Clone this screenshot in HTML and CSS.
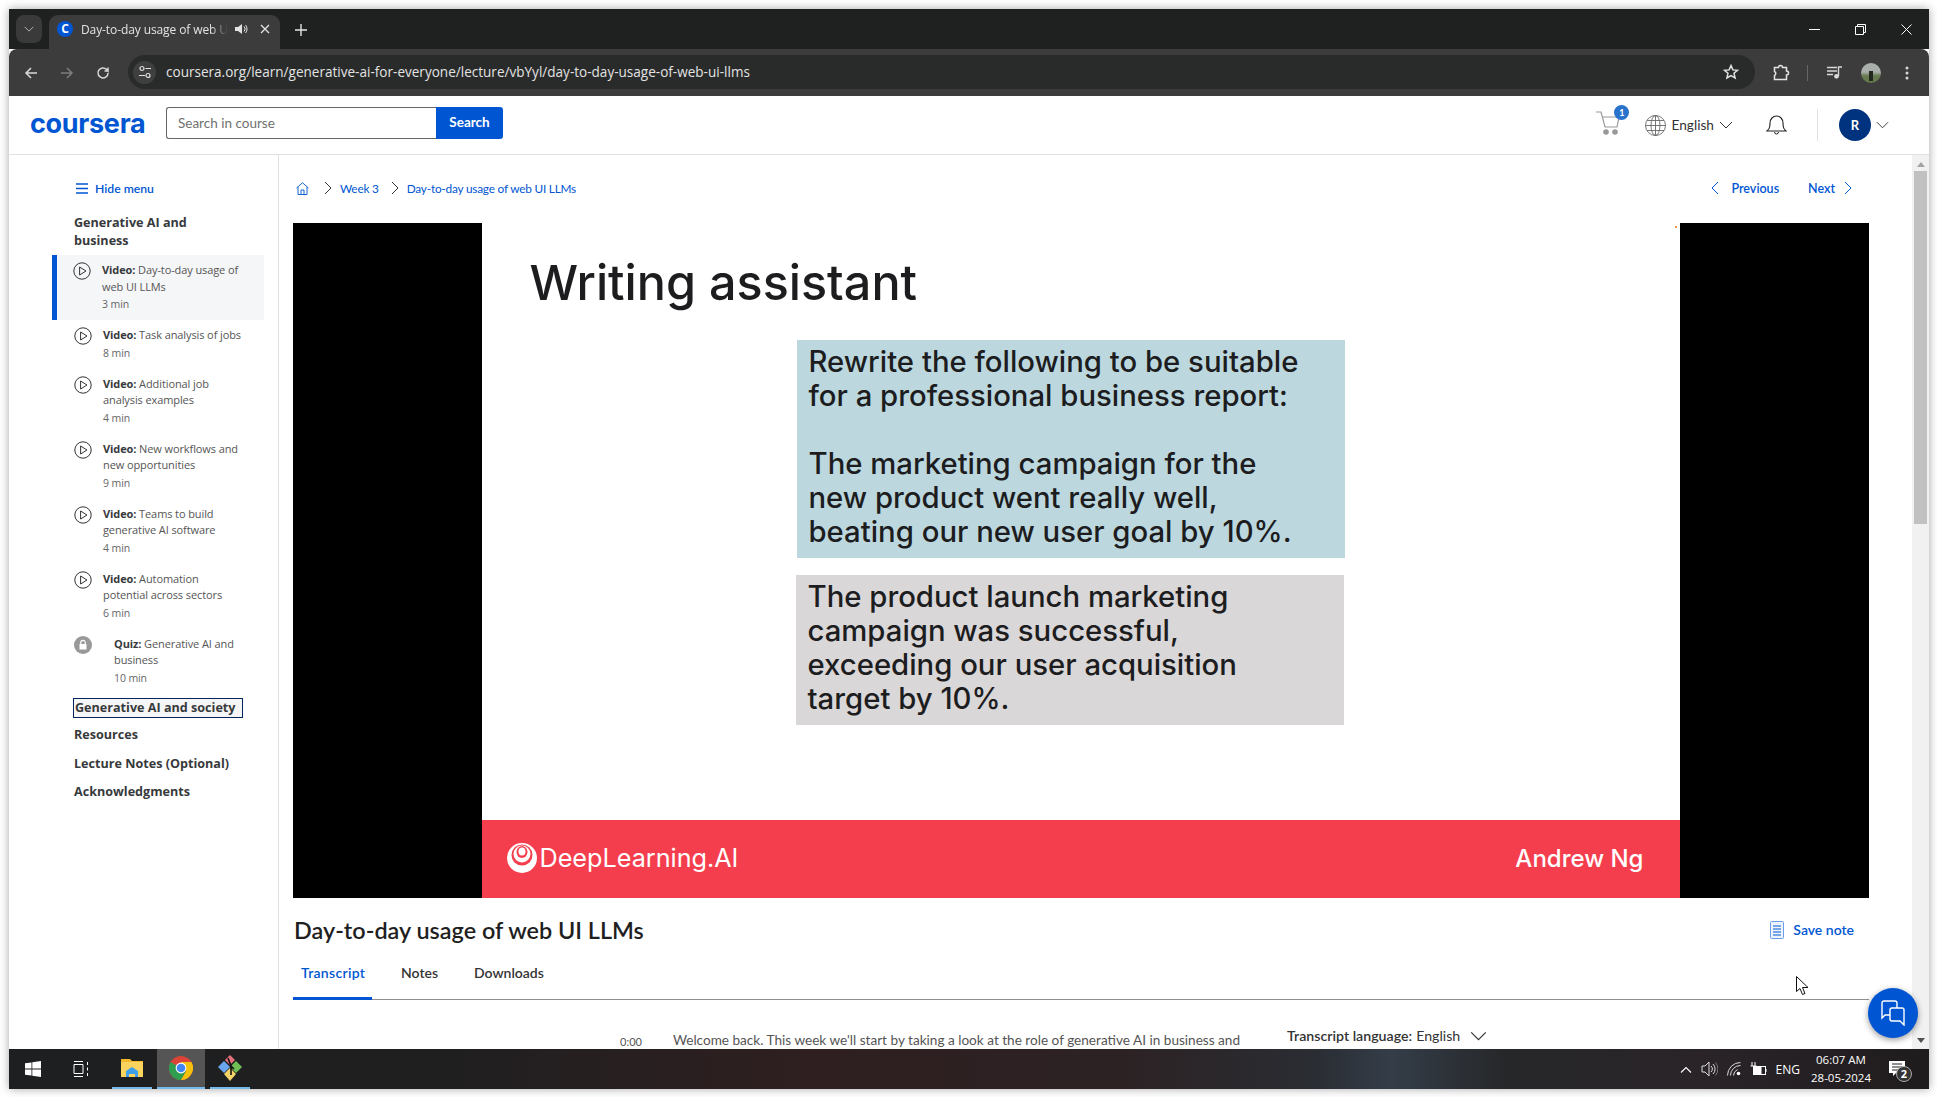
FILE: index.html
```html
<!DOCTYPE html>
<html lang="en">
<head>
  <meta charset="UTF-8" />
  <title>Day-to-day usage of web UI LLMs</title>
  <link rel="stylesheet" href="styles.css">
</head>
<body>
  <svg class="sprite" width="0" height="0">
    <symbol id="play" viewBox="0 0 18 18">
      <circle cx="9" cy="9" r="8.2" fill="none" stroke="#333" stroke-width="1"/>
      <path d="M6.6 5v8l6.4-4z" fill="none" stroke="#333" stroke-width="1"/>
    </symbol>
    <symbol id="chev-down" viewBox="0 0 14 8">
      <path d="M1 1l6 6 6-6" fill="none" stroke="currentColor" stroke-width="1"/>
    </symbol>
    <symbol id="chev-right" viewBox="0 0 8 14">
      <path d="M1 1l6 6-6 6" fill="none" stroke="currentColor" stroke-width="1"/>
    </symbol>
  </svg>

  <div class="window">
    <div class="tabstrip">
      <div class="tab-search"><svg width="10" height="6"><use href="#chev-down"/></svg></div>
      <div class="tab">
        <span class="favicon">C</span>
        <span class="tab-title">Day-to-day usage of web UI LLMs</span>
        <svg class="tab-audio" width="14" height="14" viewBox="0 0 14 14"><path d="M1 5h3l4-3v10l-4-3H1z" fill="#e3e3e3"/><path d="M10 4.5a3.5 3.5 0 0 1 0 5M11.5 3a6 6 0 0 1 0 8" fill="none" stroke="#e3e3e3"/></svg>
        <svg class="tab-close" width="10" height="10" viewBox="0 0 10 10"><path d="M1 1l8 8M9 1l-8 8" stroke="#e3e3e3" stroke-width="1.3"/></svg>
      </div>
      <svg class="new-tab" width="12" height="12" viewBox="0 0 12 12"><path d="M6 0v12M0 6h12" stroke="#e3e3e3" stroke-width="1.4"/></svg>
      <div class="win-controls">
        <svg width="11" height="11" viewBox="0 0 11 11"><path d="M0 5.5h11" stroke="#fff"/></svg>
        <svg width="11" height="11" viewBox="0 0 11 11"><path d="M.5 2.5h8v8h-8zM2.5 2.5v-2h8v8h-2" fill="none" stroke="#fff"/></svg>
        <svg width="11" height="11" viewBox="0 0 11 11"><path d="M.5.5l10 10M10.5.5l-10 10" stroke="#fff"/></svg>
      </div>
    </div>

    <div class="toolbar">
      <svg class="nav-icon" width="14" height="14" viewBox="0 0 14 14"><path d="M13 7H2M7 2L2 7l5 5" fill="none" stroke="#d8d8d8" stroke-width="1.5"/></svg>
      <svg class="nav-icon" width="14" height="14" viewBox="0 0 14 14"><path d="M1 7h11M7 2l5 5-5 5" fill="none" stroke="#7d7d7d" stroke-width="1.5"/></svg>
      <svg class="nav-icon" width="14" height="14" viewBox="0 0 14 14"><path d="M12 7a5 5 0 1 1-1.5-3.6L12 5V1.5M12 5H8.5" fill="none" stroke="#d8d8d8" stroke-width="1.5"/></svg>
      <div class="omnibox">
        <span class="site-info"><svg width="14" height="14" viewBox="0 0 14 14"><circle cx="4" cy="3.5" r="2" fill="none" stroke="#e3e3e3" stroke-width="1.2"/><path d="M7.5 3.5H13M1 10.5h6" stroke="#e3e3e3" stroke-width="1.2"/><circle cx="10" cy="10.5" r="2" fill="none" stroke="#e3e3e3" stroke-width="1.2"/></svg></span>
        <span class="url">coursera.org/learn/generative-ai-for-everyone/lecture/vbYyl/day-to-day-usage-of-web-ui-llms</span>
        <svg class="star" width="16" height="16" viewBox="0 0 16 16"><path d="M8 1.6l1.9 4.3 4.6.4-3.5 3 1.1 4.6L8 11.5l-4.1 2.4L5 9.3l-3.5-3 4.6-.4z" fill="none" stroke="#e3e3e3" stroke-width="1.5"/></svg>
      </div>
      <svg class="ext" width="17" height="17" viewBox="0 0 17 17"><path d="M1.5 3.5h4a2 2 0 0 1 4 0h4V7a2 2 0 0 1 0 4v4.500h-12v-4a2.200 2.200 0 0 0 0-4z" fill="none" stroke="#e3e3e3" stroke-width="1.5"/></svg>
      <span class="tool-sep"></span>
      <svg class="media" width="16" height="13" viewBox="0 0 16 13"><path d="M0 1.500h10M0 5h10M0 8.500h6" stroke="#d8d8d8" stroke-width="1.4"/><path d="M11.500 10V1H15" fill="none" stroke="#d8d8d8" stroke-width="1.4"/><circle cx="9.500" cy="10.300" r="2.400" fill="#d8d8d8"/></svg>
      <span class="profile-pic"><span class="profile-man"></span></span>
      <svg class="kebab" width="4" height="14" viewBox="0 0 4 14"><circle cx="2" cy="2" r="1.500" fill="#d8d8d8"/><circle cx="2" cy="7" r="1.500" fill="#d8d8d8"/><circle cx="2" cy="12" r="1.500" fill="#d8d8d8"/></svg>
    </div>

    <header class="site-header">
      <span class="logo">coursera</span>
      <div class="search-box">
        <span class="search-input">Search in course</span>
        <span class="search-btn">Search</span>
      </div>
      <div class="header-right">
        <span class="cart">
          <svg width="26" height="24" viewBox="0 0 26 24"><path d="M0 1h5l4 15h12l2-10H7" fill="none" stroke="#999" stroke-width="1.2"/><circle cx="10" cy="21" r="2.800" fill="#999"/><circle cx="19" cy="21" r="2.800" fill="#999"/></svg>
          <span class="cart-badge">1</span>
        </span>
        <span class="lang">
          <svg width="21" height="21" viewBox="0 0 21 21" fill="none" stroke="#666" stroke-width=".9"><circle cx="10.500" cy="10.500" r="10"/><ellipse cx="10.500" cy="10.500" rx="4.500" ry="10"/><path d="M10.500.5v20M.5 10.500h20M2 5.500h17M2 15.500h17"/></svg>
          <span>English</span>
          <svg class="chev" width="14" height="8"><use href="#chev-down"/></svg>
        </span>
        <svg class="bell" width="21" height="22" viewBox="0 0 21 22"><path d="M1 17c2-2 3-3 3-8 0-4 3-7 6.500-7S17 5 17 9c0 5 1 6 3 8z" fill="none" stroke="#222" stroke-width="1.1"/><path d="M8.500 18a2 2 0 0 0 4 0" fill="none" stroke="#222"/></svg>
        <span class="head-sep"></span>
        <span class="avatar">R</span>
        <svg class="chev" width="13" height="8"><use href="#chev-down"/></svg>
      </div>
    </header>

    <div class="content">
      <aside class="sidebar">
        <div class="hide-menu">
          <svg width="12" height="11" viewBox="0 0 12 11"><path d="M0 1h12M0 5.500h12M0 10h12" stroke="#0056d2" stroke-width="1.4"/></svg>
          <span>Hide menu</span>
        </div>
        <div class="module-title">Generative AI and business</div>
        <ul class="lessons">
          <li class="lesson active">
            <svg class="lesson-icon" width="18" height="18"><use href="#play"/></svg>
            <div><p><b>Video:</b> Day-to-day usage of<br>web UI LLMs</p><p class="dur">3 min</p></div>
          </li>
          <li class="lesson">
            <svg class="lesson-icon" width="18" height="18"><use href="#play"/></svg>
            <div><p><b>Video:</b> Task analysis of jobs</p><p class="dur">8 min</p></div>
          </li>
          <li class="lesson">
            <svg class="lesson-icon" width="18" height="18"><use href="#play"/></svg>
            <div><p><b>Video:</b> Additional job<br>analysis examples</p><p class="dur">4 min</p></div>
          </li>
          <li class="lesson">
            <svg class="lesson-icon" width="18" height="18"><use href="#play"/></svg>
            <div><p><b>Video:</b> New workflows and<br>new opportunities</p><p class="dur">9 min</p></div>
          </li>
          <li class="lesson">
            <svg class="lesson-icon" width="18" height="18"><use href="#play"/></svg>
            <div><p><b>Video:</b> Teams to build<br>generative AI software</p><p class="dur">4 min</p></div>
          </li>
          <li class="lesson">
            <svg class="lesson-icon" width="18" height="18"><use href="#play"/></svg>
            <div><p><b>Video:</b> Automation<br>potential across sectors</p><p class="dur">6 min</p></div>
          </li>
          <li class="lesson quiz">
            <svg class="lesson-icon" width="18" height="18" viewBox="0 0 18 18"><circle cx="9" cy="9" r="9" fill="#999"/><rect x="5.500" y="8" width="7" height="5.500" fill="#fff"/><path d="M6.800 8V6.500a2.200 2.200 0 0 1 4.400 0V8" fill="none" stroke="#fff" stroke-width="1.2"/></svg>
            <div><p><b>Quiz:</b> Generative AI and<br>business</p><p class="dur">10 min</p></div>
          </li>
        </ul>
        <div class="module focused">Generative AI and society</div>
        <div class="module">Resources</div>
        <div class="module">Lecture Notes (Optional)</div>
        <div class="module">Acknowledgments</div>
      </aside>

      <main class="main">
        <div class="crumbs">
          <svg class="home" width="13" height="13" viewBox="0 0 13 13"><path d="M.5 6L6.500.8 12.500 6M2 5v7.500h9V5M5 12.500V8h3v4.500" fill="none" stroke="#0056d2" stroke-width=".9"/></svg>
          <svg class="crumb-sep" width="8" height="14"><use href="#chev-right"/></svg>
          <span>Week 3</span>
          <svg class="crumb-sep" width="8" height="14"><use href="#chev-right"/></svg>
          <span>Day-to-day usage of web UI LLMs</span>
          <span class="pager">
            <svg class="flip" width="8" height="14"><use href="#chev-right"/></svg>
            <span class="prev">Previous</span>
            <span class="next">Next</span>
            <svg width="8" height="14"><use href="#chev-right"/></svg>
          </span>
        </div>

        <div class="video">
          <div class="slide">
            <div class="slide-body">
              <h2 class="slide-title">Writing assistant</h2>
              <div class="prompt-box">Rewrite the following to be suitable<br>for a professional business report:<br><br>The marketing campaign for the<br>new product went really well,<br>beating our new user goal by 10%.</div>
              <div class="answer-box">The product launch marketing<br>campaign was successful,<br>exceeding our user acquisition<br>target by 10%.</div>
            </div>
            <div class="slide-foot">
              <svg width="30" height="30" viewBox="0 0 30 30"><circle cx="15" cy="15" r="15" fill="#fff"/><circle cx="15" cy="12" r="10.500" fill="#f53e4d"/><circle cx="15" cy="11" r="8.500" fill="#fff"/><ellipse cx="15" cy="9" rx="5.500" ry="6" fill="#f53e4d"/><ellipse cx="15" cy="8.500" rx="3.500" ry="4" fill="#fff"/></svg>
              <span class="dl-name">DeepLearning.AI</span>
              <span class="presenter">Andrew Ng</span>
            </div>
            <span class="slide-dot"></span>
          </div>
        </div>

        <div class="title-row">
          <h1>Day-to-day usage of web UI LLMs</h1>
          <span class="save-note">
            <svg width="14" height="18" viewBox="0 0 14 18"><rect x=".5" y=".5" width="13" height="17" rx="1" fill="#eef4fd" stroke="#6a9fe8"/><path d="M3 5h8M3 8h8M3 11h8M3 14h8" stroke="#0056d2"/></svg>
            <span>Save note</span>
          </span>
        </div>

        <div class="tabs">
          <span class="tab-link current">Transcript</span>
          <span class="tab-link">Notes</span>
          <span class="tab-link">Downloads</span>
        </div>

        <div class="transcript">
          <span class="stamp">0:00</span>
          <span class="line">Welcome back. This week we'll start by taking a look at the role of generative AI in business and</span>
          <span class="tr-lang"><b>Transcript language:</b> English
            <svg width="17" height="10"><use href="#chev-down"/></svg>
          </span>
        </div>
      </main>

      <div class="scrollbar">
        <span class="arrow up"></span>
        <span class="thumb"></span>
        <span class="arrow down"></span>
      </div>
    </div>

    <footer class="taskbar">
      <svg class="win-logo" width="16" height="16" viewBox="0 0 16 16"><path d="M0 2.300l6.500-.9v6.200H0zM7.300 1.300L16 0v7.600H7.300zM0 8.400h6.500v6.200L0 13.700zM7.300 8.400H16V16l-8.700-1.300z" fill="#fff"/></svg>
      <svg class="task-view" width="16" height="16" viewBox="0 0 16 16" fill="none" stroke="#fff"><path d="M1 .5h9M1 15.500h9M1 3.500h9v9H1zM14.500 1v3M14.500 6.500v3M14.500 12v3"/></svg>
      <span class="task-item explorer">
        <svg width="22" height="22" viewBox="0 0 22 22"><path d="M0 2h9l2 2h11v16H0z" fill="#f5b92c"/><path d="M0 5h22v15H0z" fill="#fbd45f"/><path d="M5 14l6-4 6 4v6h-3v-3H8v3H5z" fill="#3f9fe8"/></svg>
      </span>
      <span class="task-item chrome">
        <svg width="24" height="24" viewBox="0 0 24 24"><circle cx="12" cy="12" r="12" fill="#db4437"/><path d="M12 12L1.600 6A12 12 0 0 0 12 24l5.200-9z" fill="#2f9e4f"/><path d="M12 6h10.400A12 12 0 0 1 12 24l5.200-9z" fill="#f4c20d"/><circle cx="12" cy="12" r="5.400" fill="#fff"/><circle cx="12" cy="12" r="4.300" fill="#4285f4"/></svg>
      </span>
      <span class="task-item gitapp">
        <svg width="24" height="26" viewBox="0 0 24 26"><path d="M0 12l6-6 6 6-6 6z" fill="#6aa5f0"/><path d="M7 5l5-5 5 5-5 5z" fill="#e5707b"/><path d="M12 12l6-6 6 6-6 6z" fill="#6fbf55"/><path d="M6 19l6-6 6 6-6 7z" fill="#f3d468"/><path d="M10 3l3 8v9M13 11l3 3" fill="none" stroke="#111" stroke-width="1.6"/></svg>
      </span>
      <div class="tray">
        <svg width="12" height="7" viewBox="0 0 12 7"><path d="M1 6.500l5-5 5 5" fill="none" stroke="#fff" stroke-width="1.1"/></svg>
        <svg width="17" height="16" viewBox="0 0 17 16" fill="none" stroke="#ddd"><path d="M1 5h3l4-4v14l-4-4H1z"/><path d="M10 5a4 4 0 0 1 0 6M12 3a7 7 0 0 1 0 10" /><path d="M14.500 1.500a10 10 0 0 1 0 13" stroke="#777"/></svg>
        <svg width="14" height="14" viewBox="0 0 14 14" fill="none" stroke="#ddd"><path d="M.5 13.500A13 13 0 0 1 13.500.5M3.500 13.500a10 10 0 0 1 10-10M6.500 13.500a7 7 0 0 1 4-6"/><circle cx="11.500" cy="11.500" r="1.800" fill="#fff" stroke="none"/></svg>
        <svg width="17" height="14" viewBox="0 0 17 14"><rect x="3.500" y="4.500" width="12" height="8" fill="none" stroke="#fff"/><rect x="3.500" y="4.500" width="8" height="8" fill="#fff"/><path d="M16 7v3" stroke="#fff"/><path d="M2 0v4M5 0v4M.5 4h6" stroke="#fff"/></svg>
        <span class="eng">ENG</span>
        <span class="clock"><span>06:07 AM</span><span>28-05-2024</span></span>
        <span class="notif">
          <svg width="16" height="16" viewBox="0 0 16 16"><path d="M0 0h16v12H7l-3 3v-3H0z" fill="#fff"/><path d="M3 3h10M3 6h10M3 9h7" stroke="#222"/></svg>
          <span class="notif-count">2</span>
        </span>
      </div>
    </footer>

    <span class="chat-btn">
      <svg width="26" height="26" viewBox="0 0 26 26" fill="none" stroke="#fff" stroke-width="1.4"><path d="M10 15H5l-3 3V3a2 2 0 0 1 2-2h11a2 2 0 0 1 2 2v5"/><path d="M10 10a2 2 0 0 1 2-2h10a2 2 0 0 1 2 2v15l-4-4h-8a2 2 0 0 1-2-2z"/></svg>
    </span>
    <svg class="mouse" width="13" height="20" viewBox="0 0 13 20"><path d="M.5.5v15l3.500-3 2.500 6 2.500-1-2.500-6H12z" fill="#fff" stroke="#111"/></svg>
  </div>
</body>
</html>
```

FILE: styles.css
```css
* { box-sizing: border-box; }

body {
  margin: 0;
  background: #fff;
  font-family: "Lato", "Noto Sans", sans-serif;
  overflow: hidden;
}

p, ul, h1, h2 { margin: 0; padding: 0; font-weight: normal; }

.sprite { position: absolute; }

.window {
  position: relative;
  width: 1920px;
  height: 1080px;
  margin: 9px;
  display: flex;
  flex-direction: column;
  background: #fff;
  box-shadow: 0 0 9px rgba(0,0,0,0.35);
  overflow: hidden;
}

/* browser chrome */
.tabstrip {
  height: 40px;
  flex: none;
  background: #1f2120;
  display: flex;
  align-items: flex-end;
  padding-left: 7px;
  color: #e3e3e3;
}

.tab-search {
  width: 26px;
  height: 28px;
  margin-bottom: 6px;
  border-radius: 8px;
  background: #3a3a3a;
  display: flex;
  align-items: center;
  justify-content: center;
  color: #e3e3e3;
}

.tab {
  width: 231px;
  height: 34px;
  margin-left: 7px;
  padding: 0 9px 6px 8px;
  background: #3c3c3c;
  border-radius: 9px 9px 0 0;
  display: flex;
  align-items: center;
  font-family: "Open Sans", sans-serif;
  font-size: 12px;
  letter-spacing: -0.1px;
}

.favicon {
  width: 16px;
  height: 16px;
  flex: none;
  border-radius: 50%;
  background: #0056d2;
  color: #fff;
  font: bold 12px/16px "Open Sans", sans-serif;
  text-align: center;
}

.tab-title {
  width: 147px;
  margin-left: 8px;
  white-space: nowrap;
  overflow: hidden;
  -webkit-mask-image: linear-gradient(to right, #000 88%, transparent);
  mask-image: linear-gradient(to right, #000 88%, transparent);
}

.tab-audio { margin-left: 6px; flex: none; }
.tab-close { margin-left: 12px; flex: none; }

.new-tab { margin: 0 0 13px 15px; }

.win-controls {
  margin-left: auto;
  align-self: center;
  display: flex;
  gap: 35px;
  padding-right: 17px;
}

.toolbar {
  height: 47px;
  flex: none;
  background: #3c3c3c;
  border-radius: 8px 8px 0 0;
  display: flex;
  align-items: center;
  padding-left: 15px;
}

.nav-icon { margin-right: 22px; flex: none; }

.omnibox {
  width: 1627px;
  height: 34px;
  margin-left: -4px;
  margin-top: -1px;
  border-radius: 17px;
  background: #292a2a;
  display: flex;
  align-items: center;
  padding-left: 5px;
  padding-right: 16px;
  color: #e3e3e3;
}

.site-info {
  width: 23px;
  height: 23px;
  border-radius: 50%;
  background: #3f3f3f;
  display: flex;
  align-items: center;
  justify-content: center;
  flex: none;
}

.url {
  margin-left: 10px;
  font: 13.55px "Open Sans", sans-serif;
  white-space: nowrap;
}

.star { margin-left: auto; }

.ext { margin-left: 18px; flex: none; }

.tool-sep {
  width: 1px;
  height: 16px;
  background: #666;
  margin-left: 17px;
}

.media { margin-left: 19px; flex: none; }

.profile-pic {
  width: 20px;
  height: 20px;
  margin-left: 18px;
  border-radius: 50%;
  background: linear-gradient(#a9afab 45%, #66794f 65%);
  position: relative;
  flex: none;
}

.profile-man {
  position: absolute;
  left: 8px;
  top: 8px;
  width: 4px;
  height: 10px;
  background: #23281f;
}

.kebab { margin-left: 24px; flex: none; }

/* site header */
.site-header {
  height: 59px;
  flex: none;
  display: flex;
  align-items: center;
  border-bottom: 1.5px solid #e1e1e1;
  padding: 0 40px 0 21px;
}

.logo {
  width: 136px;
  margin-bottom: 4px;
  font: bold 27px "Inter", sans-serif;
  letter-spacing: -0.3px;
  color: #0056d2;
}

.search-box {
  display: flex;
  height: 32px;
  margin-bottom: 4px;
  font-size: 13.5px;
}

.search-input {
  width: 270px;
  border: 1px solid #666;
  border-right: none;
  border-radius: 3px 0 0 3px;
  padding-left: 11px;
  line-height: 30px;
  color: #6f6f6f;
}

.search-btn {
  width: 67px;
  background: #0056d2;
  color: #fff;
  font-weight: bold;
  text-align: center;
  line-height: 30px;
  border-radius: 0 3px 3px 0;
}

.header-right {
  margin-left: auto;
  display: flex;
  align-items: center;
  color: #333;
}

.cart { position: relative; display: flex; margin-top: -4px; }

.cart-badge {
  position: absolute;
  left: 18px;
  top: -6px;
  width: 15px;
  height: 15px;
  border-radius: 50%;
  background: #2a73cc;
  color: #fff;
  font-size: 9px;
  font-weight: bold;
  text-align: center;
  line-height: 15px;
}

.lang {
  margin-left: 23px;
  display: flex;
  align-items: center;
  font-size: 13.7px;
}

.lang span { margin-left: 5px; margin-top: -2px; }
.lang .chev { margin-left: 5px; }

.bell { margin-left: 33px; }

.head-sep {
  width: 1px;
  height: 32px;
  background: #e1e1e1;
  margin-left: 30px;
}

.avatar {
  width: 32px;
  height: 32px;
  margin-left: 21px;
  border-radius: 50%;
  background: #00337f;
  color: #fff;
  font-size: 13px;
  font-weight: bold;
  text-align: center;
  line-height: 32px;
}

.header-right > .chev { margin-left: 5px; }

/* page body */
.content {
  flex: 1;
  min-height: 0;
  display: flex;
}

.sidebar {
  width: 270px;
  flex: none;
  border-right: 1px solid #e1e1e1;
  font-family: "Open Sans", sans-serif;
  color: #373a3c;
  padding-top: 25px;
}

.hide-menu {
  display: flex;
  align-items: center;
  gap: 7px;
  height: 16px;
  padding-left: 67px;
  color: #0056d2;
  font: 600 12.2px "Lato", sans-serif;
}

.module-title {
  width: 150px;
  margin: 18px 0 0 65px;
  font-size: 12.6px;
  font-weight: 700;
  line-height: 18px;
}

.lessons { list-style: none; width: 212px; margin: 5px 0 0 43px; }

.lesson {
  display: flex;
  padding: 7px 0 7px 22px;
  font-size: 11px;
  line-height: 16.5px;
  letter-spacing: -0.1px;
  color: #555;
}

.lesson b { font-weight: 700; color: #373a3c; }

.lesson.active {
  background: #f5f6f8;
  border-left: 5px solid #0056d2;
  padding-left: 16px;
}

.lesson-icon { flex: none; margin: 0 11px 0 0; }
.quiz .lesson-icon { margin-right: 22px; }

.lesson .dur { line-height: 18px; color: #666; font-size: 10.5px; }

.module {
  width: max-content;
  height: 20px;
  margin: 8.5px 0 0 65px;
  font-size: 12.6px;
  font-weight: 700;
  line-height: 18px;
}

.module.focused {
  margin: 4px 0 0 64px;
  padding: 0 1px;
  width: 170px;
  border: 1px solid #00255d;
  background: #f6f6f6;
  white-space: nowrap;
}

.main {
  flex: 1;
  min-width: 0;
  padding-left: 14px;
  overflow: hidden;
}

.crumbs {
  height: 68px;
  width: 1576px;
  display: flex;
  align-items: center;
  padding: 0 17px 2px 3px;
  font-size: 11.8px;
  letter-spacing: -0.2px;
  color: #0056d2;
}

.home { margin-right: 15px; }
.crumb-sep { margin-right: 8px; color: #333; }
.crumbs span + .crumb-sep { margin-left: 12px; }

.pager {
  margin-left: auto;
  display: flex;
  align-items: center;
  font-size: 12.5px;
  letter-spacing: 0;
  font-weight: 600;
}

.pager .flip { transform: scaleX(-1); }
.prev { margin-left: 12px; }
.next { margin: 0 9px 0 29px; }

.video {
  width: 1576px;
  height: 675px;
  background: #000;
  display: flex;
  justify-content: center;
  padding-right: 1px;
}

.slide {
  position: relative;
  width: 1198px;
  background: #fff;
  display: flex;
  flex-direction: column;
  font-family: "Inter", sans-serif;
  color: #1d1d1f;
}

.slide-body { flex: 1; }

.slide-title {
  height: 117px;
  padding: 29px 0 0 48px;
  font-size: 48.5px;
  line-height: 62px;
  font-weight: 500;
}

.prompt-box, .answer-box {
  width: 548px;
  padding: 5px 0 0 12px;
  font-size: 29.3px;
  line-height: 34px;
  font-weight: 500;
}

.prompt-box { height: 218px; margin-left: 315px; background: #bcd8de; }
.answer-box { height: 150px; margin: 17px 0 0 314px; background: #d9d7d7; }

.slide-foot {
  height: 78px;
  flex: none;
  background: #f53e4d;
  color: #fff;
  display: flex;
  align-items: center;
  padding: 0 36px 2px 25px;
  font-size: 25.2px;
}

.dl-name { margin-left: 3px; }
.presenter { margin-left: auto; font-size: 24px; font-weight: 500; }

.slide-dot {
  position: absolute;
  right: 3px;
  top: 3px;
  width: 2px;
  height: 2px;
  background: #f2924a;
}

.title-row {
  width: 1576px;
  height: 55px;
  display: flex;
  align-items: center;
  justify-content: space-between;
  padding: 0 15px 0 1px;
  margin-top: 4px;
}

.title-row h1 {
  font-size: 23.4px;
  color: #1f1f1f;
  font-weight: 600;
}

.save-note {
  display: flex;
  align-items: center;
  gap: 9px;
  color: #0056d2;
  font-size: 14px;
  font-weight: 600;
}

.tabs {
  width: 1576px;
  height: 42.5px;
  display: flex;
  border-bottom: 1.5px solid #909090;
  font-size: 14px;
  font-weight: 600;
  color: #333;
}

.tab-link {
  height: 42.5px;
  padding: 7px 8px 0;
  margin-right: 20px;
  margin-bottom: -2px;
}

.tab-link.current {
  width: 79px;
  color: #0056d2;
  border-bottom: 3px solid #0056d2;
  margin-right: 21px;
  letter-spacing: 0.3px;
}

.transcript {
  display: flex;
  font-size: 13.6px;
  color: #555;
  padding: 32px 0 0 327px;
}

.stamp { font-size: 11px; padding-top: 3px; }

.line { margin-left: 31px; white-space: nowrap; }

.tr-lang {
  margin: -5px 0 0 47px;
  display: flex;
  align-items: center;
  gap: 4px;
  font-size: 14.2px;
  color: #333;
  white-space: nowrap;
  height: 18px;
}

.tr-lang b { font-weight: 600; }

.tr-lang svg { margin-left: 6px; }

.scrollbar {
  width: 17px;
  flex: none;
  background: #f1f1f1;
  display: flex;
  flex-direction: column;
  align-items: center;
  padding: 0 2px;
}

.thumb {
  width: 13px;
  height: 353px;
  margin-top: 4px;
  background: #c1c1c1;
}

.arrow {
  width: 0;
  height: 0;
  border-left: 4px solid transparent;
  border-right: 4px solid transparent;
}

.arrow.up { border-bottom: 5px solid #a3a3a3; margin-top: 7px; }
.arrow.down { border-top: 5px solid #505050; margin-top: auto; margin-bottom: 6px; }

/* windows taskbar */
.taskbar {
  height: 40px;
  flex: none;
  display: flex;
  align-items: center;
  padding-left: 16px;
  color: #fff;
  background: linear-gradient(to right, #1e1f20 0, #1f1f20 22%, #2f1f20 42%, #2c2224 58%, #2a2d33 68%, #343d48 72%, #262729 78%, #2a2428 88%, #1f1c1e 100%);
}

.win-logo { flex: none; }
.task-view { flex: none; margin-left: 32px; }

.task-item {
  height: 40px;
  display: flex;
  align-items: center;
  justify-content: center;
  border-bottom: 2px solid #76b9ed;
  flex: none;
}

.explorer { width: 40px; margin-left: 23px; }
.chrome { width: 48px; margin-left: 5px; background: #555; }
.gitapp { width: 40px; margin-left: 5px; }

.tray {
  margin-left: auto;
  display: flex;
  align-items: center;
  gap: 9px;
  font: 12px "Open Sans", sans-serif;
  padding-right: 24px;
}

.eng { margin-left: 0; }

.clock {
  display: flex;
  flex-direction: column;
  align-items: center;
  width: 62px;
  font-size: 11.5px;
  line-height: 18px;
  margin: 0 8px 0 1px;
}

.notif { position: relative; display: flex; }

.notif-count {
  position: absolute;
  left: 7px;
  top: 5px;
  width: 16px;
  height: 16px;
  border-radius: 50%;
  border: 1px solid #aaa;
  background: #333;
  font-size: 11px;
  font-weight: bold;
  line-height: 14px;
  text-align: center;
}

.chat-btn {
  position: absolute;
  left: 1859px;
  top: 979px;
  width: 50px;
  height: 50px;
  border-radius: 50%;
  background: #0056d2;
  box-shadow: 0 2px 6px rgba(0,0,0,0.4);
  display: flex;
  align-items: center;
  justify-content: center;
}

.mouse {
  position: absolute;
  left: 1787px;
  top: 967px;
}
```
